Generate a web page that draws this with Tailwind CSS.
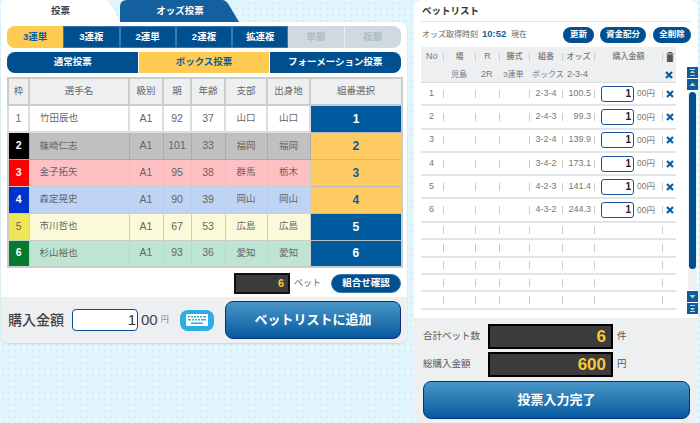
<!DOCTYPE html>
<html lang="ja">
<head>
<meta charset="utf-8">
<title>投票</title>
<script src="https://cdn.jsdelivr.net/npm/@tailwindcss/browser@4"></script>
</head>
<body class="w-[700px] h-[423px] overflow-hidden bg-[#e4f6fd] bg-[radial-gradient(#cbe8f3_0.6px,transparent_0.9px)] bg-[length:6px_6px] font-['Liberation_Sans','Noto_Sans_CJK_JP',sans-serif] text-[#666]">
<div class="flex items-start">
  <!-- left column -->
  <div class="w-[406px] ml-px">
    <div class="flex h-[22px]">
      <div class="relative w-[119px] h-[22px] flex items-center justify-center text-[9.5px] font-bold text-[#444]">
        <svg class="absolute inset-0" width="119" height="22" viewBox="0 0 119 22"><path d="M0 22V6Q0 0 6 0H103Q107 0 110 5L119 22Z" fill="#fff"/></svg>
        <span class="relative">投票</span>
      </div>
      <div class="relative w-[120px] h-[22px] flex items-center justify-center text-[9.5px] font-bold text-white">
        <svg class="absolute inset-0" width="120" height="22" viewBox="0 0 120 22"><path d="M0 22V7Q0 0 7 0H102Q106 0 109 5L119 22Z" fill="#14609f"/></svg>
        <span class="relative">オッズ投票</span>
      </div>
    </div>
    <div class="bg-white rounded-b-lg rounded-tr-lg shadow-[0_1px_2px_rgba(0,0,0,0.15)] h-[321px] flex flex-col">
      <div class="px-[6px] pt-[4px] flex flex-col">
        <div class="grid grid-cols-7 h-[22px] rounded-lg overflow-hidden text-[9.5px] font-bold text-white bg-[#cfd9df]">
          <div class="flex items-center justify-center bg-[#ffcb52] text-[#0a5ca3]">3連単</div>
          <div class="flex items-center justify-center bg-[#00508f] border border-[#3a78ab]">3連複</div>
          <div class="flex items-center justify-center bg-[#00508f] border border-[#3a78ab]">2連単</div>
          <div class="flex items-center justify-center bg-[#00508f] border border-[#3a78ab]">2連複</div>
          <div class="flex items-center justify-center bg-[#00508f] border border-[#3a78ab]">拡連複</div>
          <div class="flex items-center justify-center text-[#b0bcc4] border-r border-[#e6ecef]">単勝</div>
          <div class="flex items-center justify-center text-[#b0bcc4]">複勝</div>
        </div>
        <div class="grid grid-cols-3 h-[21px] mt-[4px] rounded-lg overflow-hidden text-[9.5px] font-bold text-white">
          <div class="flex items-center justify-center bg-[#00508f]">通常投票</div>
          <div class="flex items-center justify-center bg-[#ffcb52] text-[#0a5ca3] border-x border-white">ボックス投票</div>
          <div class="flex items-center justify-center bg-[#00508f]">フォーメーション投票</div>
        </div>
        <table class="table-fixed border-collapse w-[394px] mt-[4px] text-[9.5px] text-center border-2 border-[#ccc]">
          <colgroup>
            <col class="w-[21px]"><col class="w-[100px]"><col class="w-[34px]"><col class="w-[28px]"><col class="w-[34px]"><col class="w-[42px]"><col class="w-[43px]"><col class="w-[92px]">
          </colgroup>
          <thead>
            <tr class="h-[27px] bg-[#eeeff1]">
              <th class="font-normal border-2 border-[#ccc]">枠</th>
              <th class="font-normal border-2 border-[#ccc]">選手名</th>
              <th class="font-normal border-2 border-[#ccc]">級別</th>
              <th class="font-normal border-2 border-[#ccc]">期</th>
              <th class="font-normal border-2 border-[#ccc]">年齢</th>
              <th class="font-normal border-2 border-[#ccc]">支部</th>
              <th class="font-normal border-2 border-[#ccc]">出身地</th>
              <th class="font-normal border-2 border-[#ccc]">組番選択</th>
            </tr>
          </thead>
          <tbody>
            <tr class="h-[27px] bg-white">
              <td class="border-2 border-[#ddd] text-[10.5px]">1</td>
              <td class="border-2 border-[#ddd] text-left pl-[10px]">竹田辰也</td>
              <td class="border-2 border-[#ddd] text-[10.5px]">A1</td><td class="border-2 border-[#ddd] text-[10.5px]">92</td><td class="border-2 border-[#ddd] text-[10.5px]">37</td><td class="border-2 border-[#ddd]">山口</td><td class="border-2 border-[#ddd]">山口</td>
              <td class="border border-[#bbb] bg-[#005a9e] text-white font-bold text-[12px]">1</td>
            </tr>
            <tr class="h-[27px] bg-[#c0c0c0]">
              <td class="border border-[#aaa] bg-black text-white font-bold text-[10.5px]">2</td>
              <td class="border border-[#aaa] text-left pl-[10px]">篠崎仁志</td>
              <td class="border border-[#aaa] text-[10.5px]">A1</td><td class="border border-[#aaa] text-[10.5px]">101</td><td class="border border-[#aaa] text-[10.5px]">33</td><td class="border border-[#aaa]">福岡</td><td class="border border-[#aaa]">福岡</td>
              <td class="border border-[#bbb] bg-[#fdcb62] text-[#0a5ca3] font-bold text-[12px]">2</td>
            </tr>
            <tr class="h-[27px] bg-[#ffc0c4]">
              <td class="border border-[#ccc] bg-[#f00] text-white font-bold text-[10.5px]">3</td>
              <td class="border border-[#ccc] text-left pl-[10px]">金子拓矢</td>
              <td class="border border-[#ccc] text-[10.5px]">A1</td><td class="border border-[#ccc] text-[10.5px]">95</td><td class="border border-[#ccc] text-[10.5px]">38</td><td class="border border-[#ccc]">群馬</td><td class="border border-[#ccc]">栃木</td>
              <td class="border border-[#bbb] bg-[#fdcb62] text-[#0a5ca3] font-bold text-[12px]">3</td>
            </tr>
            <tr class="h-[27px] bg-[#bfd3f2]">
              <td class="border border-[#ccc] bg-[#0033cc] text-white font-bold text-[10.5px]">4</td>
              <td class="border border-[#ccc] text-left pl-[10px]">森定晃史</td>
              <td class="border border-[#ccc] text-[10.5px]">A1</td><td class="border border-[#ccc] text-[10.5px]">90</td><td class="border border-[#ccc] text-[10.5px]">39</td><td class="border border-[#ccc]">岡山</td><td class="border border-[#ccc]">岡山</td>
              <td class="border border-[#bbb] bg-[#fdcb62] text-[#0a5ca3] font-bold text-[12px]">4</td>
            </tr>
            <tr class="h-[27px] bg-[#fafad8]">
              <td class="border border-[#ccc] bg-[#eee654] text-[10.5px]">5</td>
              <td class="border border-[#ccc] text-left pl-[10px]">市川哲也</td>
              <td class="border border-[#ccc] text-[10.5px]">A1</td><td class="border border-[#ccc] text-[10.5px]">67</td><td class="border border-[#ccc] text-[10.5px]">53</td><td class="border border-[#ccc]">広島</td><td class="border border-[#ccc]">広島</td>
              <td class="border border-[#bbb] bg-[#005a9e] text-white font-bold text-[12px]">5</td>
            </tr>
            <tr class="h-[27px] bg-[#bde5d2]">
              <td class="border border-[#ccc] bg-[#067a2e] text-white font-bold text-[10.5px]">6</td>
              <td class="border border-[#ccc] text-left pl-[10px]">杉山裕也</td>
              <td class="border border-[#ccc] text-[10.5px]">A1</td><td class="border border-[#ccc] text-[10.5px]">93</td><td class="border border-[#ccc] text-[10.5px]">36</td><td class="border border-[#ccc]">愛知</td><td class="border border-[#ccc]">愛知</td>
              <td class="border border-[#bbb] bg-[#005a9e] text-white font-bold text-[12px]">6</td>
            </tr>
          </tbody>
        </table>
        <div class="flex items-center h-[21px] mt-[5px] justify-end">
          <div class="w-[56px] h-[21px] bg-[#3c3c3c] border-2 border-[#111] text-right pr-[4px] text-[#f5c93a] font-bold text-[11px] leading-[17px]">6</div>
          <span class="text-[9px] ml-[4px] w-[37px]">ベット</span>
          <div class="w-[70px] h-[19px] rounded-full bg-[#00508f] border border-[#3a78ab] text-white font-bold text-[9.5px] flex items-center justify-center">組合せ確認</div>
        </div>
      </div>
      <div class="mt-[3px] h-[46px] bg-[#eeeff1] rounded-b-lg flex items-center pl-[7px]">
        <span class="text-[14px] font-medium text-[#444] w-[57px] whitespace-nowrap">購入金額</span>
        <div class="ml-[7px] w-[66px] h-[22px] bg-white border border-[#0a4d94] rounded-[4px] text-right pr-px text-[15px] text-[#333] leading-[20px]">1</div>
        <div class="w-[42px] flex items-center">
          <span class="ml-[3px] text-[15px] text-[#444]">00</span>
          <span class="ml-[3px] text-[8px] text-[#777]">円</span>
        </div>
        <div class="w-[34px] h-[21px] rounded-lg bg-[#2eaee0] flex items-center justify-center">
          <svg width="22" height="12" viewBox="0 0 22 12"><rect width="22" height="12" rx="1" fill="#fff"/><g fill="#2eaee0"><rect x="2" y="2" width="2" height="1.5"/><rect x="5" y="2" width="2" height="1.5"/><rect x="8" y="2" width="2" height="1.5"/><rect x="11" y="2" width="2" height="1.5"/><rect x="14" y="2" width="2" height="1.5"/><rect x="17" y="2" width="3" height="1.5"/><rect x="2" y="5" width="3" height="1.5"/><rect x="6" y="5" width="2" height="1.5"/><rect x="9" y="5" width="2" height="1.5"/><rect x="12" y="5" width="2" height="1.5"/><rect x="15" y="5" width="5" height="1.5"/><rect x="5" y="8.5" width="12" height="1.5"/></g></svg>
        </div>
        <div class="ml-[11px] w-[176px] h-[38px] rounded-lg border border-[#0a2f78] bg-linear-to-b from-[#4797c8] to-[#005a9e] text-white font-bold text-[13px] flex items-center justify-center">ベットリストに追加</div>
      </div>
    </div>
  </div>

  <!-- right column -->
  <div class="w-[284px] h-[423px] ml-[7px] bg-white rounded-lg flex flex-col">
    <div class="mx-[7px] w-[270px] h-[22px] border-b border-[#e4e4e4] pl-px pt-[3px] text-[9.5px] font-bold text-[#333] leading-[15px]">ベットリスト</div>
    <div class="flex items-center h-[25px] ml-[8px] w-[269px]">
      <span class="text-[8px] w-[60px] whitespace-nowrap">オッズ取得時刻</span>
      <span class="w-[24px] text-[9.5px] font-bold text-[#14609f]">10:52</span>
      <span class="ml-[5px] text-[8px]">現在</span>
      <div class="ml-auto w-[31px] h-[16px] rounded-full bg-[#00508f] text-white font-bold text-[8.5px] flex items-center justify-center">更新</div>
      <div class="ml-[6px] w-[46px] h-[16px] rounded-full bg-[#00508f] text-white font-bold text-[8.5px] flex items-center justify-center">資金配分</div>
      <div class="ml-[7px] w-[38px] h-[16px] rounded-full bg-[#00508f] text-white font-bold text-[8.5px] flex items-center justify-center">全削除</div>
    </div>
    <div class="flex flex-1 min-h-0">
      <div class="ml-[7px] w-[255px] text-[9px] text-[#777]">
        <div class="bg-[#eeeff1] h-[36px] border-b border-[#ddd]">
          <div class="grid grid-cols-[23px_32px_24px_30px_33px_32px_68px_13px] h-[20px] items-center text-[8px] font-medium">
            <div class="flex justify-between items-center pl-[5px]"><span class="text-[9px]">No</span><i class="w-px h-[8px] bg-[#ccc]"></i></div>
            <div class="flex justify-between items-center"><span class="flex-1 text-center">場</span><i class="w-px h-[8px] bg-[#ccc]"></i></div>
            <div class="flex justify-between items-center"><span class="flex-1 text-center text-[9px]">R</span><i class="w-px h-[8px] bg-[#ccc]"></i></div>
            <div class="flex justify-between items-center"><span class="flex-1 text-center">勝式</span><i class="w-px h-[8px] bg-[#ccc]"></i></div>
            <div class="flex justify-between items-center"><span class="flex-1 text-center">組番</span><i class="w-px h-[8px] bg-[#ccc]"></i></div>
            <div class="flex justify-between items-center"><span class="flex-1 text-center whitespace-nowrap">オッズ</span><i class="w-px h-[8px] bg-[#ccc]"></i></div>
            <div class="flex justify-between items-center"><span class="flex-1 text-center">購入金額</span><i class="w-px h-[8px] bg-[#ccc]"></i></div>
            <div class="flex justify-center"><svg width="8" height="10" viewBox="0 0 7 9"><path d="M0 1.500H7M2 1V0H5V1M1 2.500H6V9H1Z" fill="#555" stroke="#555" stroke-width="0.6"/></svg></div>
          </div>
          <div class="flex h-[15px] items-center text-[8px]">
            <span class="ml-[30px] w-[16px]">児島</span>
            <span class="ml-[14px] w-[11px] text-[9px]">2R</span>
            <span class="ml-[11px] w-[21px] whitespace-nowrap">3連単</span>
            <span class="ml-[8px] w-[32px] whitespace-nowrap">ボックス</span>
            <span class="ml-[3px] text-[9px]">2-3-4</span>
            <svg class="ml-auto mr-[3px]" width="8" height="8" viewBox="0 0 8 8"><path d="M1 1L7 7M7 1L1 7" stroke="#0a5ca3" stroke-width="2.200"/></svg>
          </div>
        </div>
        <div class="grid grid-cols-[23px_32px_24px_30px_33px_32px_68px_13px] h-[23.3px] items-center border-b-2 border-[#e2e4e6]">
          <div class="flex justify-between items-center pl-[8px]"><span>1</span><i class="w-px h-[8px] bg-[#ccc]"></i></div>
          <div class="flex justify-end"><i class="w-px h-[8px] bg-[#ccc]"></i></div>
          <div class="flex justify-end"><i class="w-px h-[8px] bg-[#ccc]"></i></div>
          <div class="flex justify-end"><i class="w-px h-[8px] bg-[#ccc]"></i></div>
          <div class="flex justify-between items-center"><span class="flex-1 text-center">2-3-4</span><i class="w-px h-[8px] bg-[#ccc]"></i></div>
          <div class="flex justify-between items-center"><span class="flex-1 text-right pr-[3px]">100.5</span><i class="w-px h-[8px] bg-[#ccc]"></i></div>
          <div class="flex items-center"><div class="ml-[6px] w-[33px] h-[16px] bg-white border border-[#1d4f94] rounded-[3px] text-right pr-[2px] text-[10px] font-bold text-[#222] leading-[14px]">1</div><span class="ml-[3px] flex-1 whitespace-nowrap text-[8.5px]">00円</span><i class="w-px h-[8px] bg-[#ccc]"></i></div>
          <div class="flex justify-center"><svg width="8" height="8" viewBox="0 0 8 8"><path d="M1 1L7 7M7 1L1 7" stroke="#0a5ca3" stroke-width="2.200"/></svg></div>
        </div>
        <div class="grid grid-cols-[23px_32px_24px_30px_33px_32px_68px_13px] h-[23.3px] items-center border-b-2 border-[#e2e4e6]">
          <div class="flex justify-between items-center pl-[8px]"><span>2</span><i class="w-px h-[8px] bg-[#ccc]"></i></div>
          <div class="flex justify-end"><i class="w-px h-[8px] bg-[#ccc]"></i></div>
          <div class="flex justify-end"><i class="w-px h-[8px] bg-[#ccc]"></i></div>
          <div class="flex justify-end"><i class="w-px h-[8px] bg-[#ccc]"></i></div>
          <div class="flex justify-between items-center"><span class="flex-1 text-center">2-4-3</span><i class="w-px h-[8px] bg-[#ccc]"></i></div>
          <div class="flex justify-between items-center"><span class="flex-1 text-right pr-[3px]">99.3</span><i class="w-px h-[8px] bg-[#ccc]"></i></div>
          <div class="flex items-center"><div class="ml-[6px] w-[33px] h-[16px] bg-white border border-[#1d4f94] rounded-[3px] text-right pr-[2px] text-[10px] font-bold text-[#222] leading-[14px]">1</div><span class="ml-[3px] flex-1 whitespace-nowrap text-[8.5px]">00円</span><i class="w-px h-[8px] bg-[#ccc]"></i></div>
          <div class="flex justify-center"><svg width="8" height="8" viewBox="0 0 8 8"><path d="M1 1L7 7M7 1L1 7" stroke="#0a5ca3" stroke-width="2.200"/></svg></div>
        </div>
        <div class="grid grid-cols-[23px_32px_24px_30px_33px_32px_68px_13px] h-[23.3px] items-center border-b-2 border-[#e2e4e6]">
          <div class="flex justify-between items-center pl-[8px]"><span>3</span><i class="w-px h-[8px] bg-[#ccc]"></i></div>
          <div class="flex justify-end"><i class="w-px h-[8px] bg-[#ccc]"></i></div>
          <div class="flex justify-end"><i class="w-px h-[8px] bg-[#ccc]"></i></div>
          <div class="flex justify-end"><i class="w-px h-[8px] bg-[#ccc]"></i></div>
          <div class="flex justify-between items-center"><span class="flex-1 text-center">3-2-4</span><i class="w-px h-[8px] bg-[#ccc]"></i></div>
          <div class="flex justify-between items-center"><span class="flex-1 text-right pr-[3px]">139.9</span><i class="w-px h-[8px] bg-[#ccc]"></i></div>
          <div class="flex items-center"><div class="ml-[6px] w-[33px] h-[16px] bg-white border border-[#1d4f94] rounded-[3px] text-right pr-[2px] text-[10px] font-bold text-[#222] leading-[14px]">1</div><span class="ml-[3px] flex-1 whitespace-nowrap text-[8.5px]">00円</span><i class="w-px h-[8px] bg-[#ccc]"></i></div>
          <div class="flex justify-center"><svg width="8" height="8" viewBox="0 0 8 8"><path d="M1 1L7 7M7 1L1 7" stroke="#0a5ca3" stroke-width="2.200"/></svg></div>
        </div>
        <div class="grid grid-cols-[23px_32px_24px_30px_33px_32px_68px_13px] h-[23.3px] items-center border-b-2 border-[#e2e4e6]">
          <div class="flex justify-between items-center pl-[8px]"><span>4</span><i class="w-px h-[8px] bg-[#ccc]"></i></div>
          <div class="flex justify-end"><i class="w-px h-[8px] bg-[#ccc]"></i></div>
          <div class="flex justify-end"><i class="w-px h-[8px] bg-[#ccc]"></i></div>
          <div class="flex justify-end"><i class="w-px h-[8px] bg-[#ccc]"></i></div>
          <div class="flex justify-between items-center"><span class="flex-1 text-center">3-4-2</span><i class="w-px h-[8px] bg-[#ccc]"></i></div>
          <div class="flex justify-between items-center"><span class="flex-1 text-right pr-[3px]">173.1</span><i class="w-px h-[8px] bg-[#ccc]"></i></div>
          <div class="flex items-center"><div class="ml-[6px] w-[33px] h-[16px] bg-white border border-[#1d4f94] rounded-[3px] text-right pr-[2px] text-[10px] font-bold text-[#222] leading-[14px]">1</div><span class="ml-[3px] flex-1 whitespace-nowrap text-[8.5px]">00円</span><i class="w-px h-[8px] bg-[#ccc]"></i></div>
          <div class="flex justify-center"><svg width="8" height="8" viewBox="0 0 8 8"><path d="M1 1L7 7M7 1L1 7" stroke="#0a5ca3" stroke-width="2.200"/></svg></div>
        </div>
        <div class="grid grid-cols-[23px_32px_24px_30px_33px_32px_68px_13px] h-[23.3px] items-center border-b-2 border-[#e2e4e6]">
          <div class="flex justify-between items-center pl-[8px]"><span>5</span><i class="w-px h-[8px] bg-[#ccc]"></i></div>
          <div class="flex justify-end"><i class="w-px h-[8px] bg-[#ccc]"></i></div>
          <div class="flex justify-end"><i class="w-px h-[8px] bg-[#ccc]"></i></div>
          <div class="flex justify-end"><i class="w-px h-[8px] bg-[#ccc]"></i></div>
          <div class="flex justify-between items-center"><span class="flex-1 text-center">4-2-3</span><i class="w-px h-[8px] bg-[#ccc]"></i></div>
          <div class="flex justify-between items-center"><span class="flex-1 text-right pr-[3px]">141.4</span><i class="w-px h-[8px] bg-[#ccc]"></i></div>
          <div class="flex items-center"><div class="ml-[6px] w-[33px] h-[16px] bg-white border border-[#1d4f94] rounded-[3px] text-right pr-[2px] text-[10px] font-bold text-[#222] leading-[14px]">1</div><span class="ml-[3px] flex-1 whitespace-nowrap text-[8.5px]">00円</span><i class="w-px h-[8px] bg-[#ccc]"></i></div>
          <div class="flex justify-center"><svg width="8" height="8" viewBox="0 0 8 8"><path d="M1 1L7 7M7 1L1 7" stroke="#0a5ca3" stroke-width="2.200"/></svg></div>
        </div>
        <div class="grid grid-cols-[23px_32px_24px_30px_33px_32px_68px_13px] h-[23.3px] items-center border-b-2 border-[#e2e4e6]">
          <div class="flex justify-between items-center pl-[8px]"><span>6</span><i class="w-px h-[8px] bg-[#ccc]"></i></div>
          <div class="flex justify-end"><i class="w-px h-[8px] bg-[#ccc]"></i></div>
          <div class="flex justify-end"><i class="w-px h-[8px] bg-[#ccc]"></i></div>
          <div class="flex justify-end"><i class="w-px h-[8px] bg-[#ccc]"></i></div>
          <div class="flex justify-between items-center"><span class="flex-1 text-center">4-3-2</span><i class="w-px h-[8px] bg-[#ccc]"></i></div>
          <div class="flex justify-between items-center"><span class="flex-1 text-right pr-[3px]">244.3</span><i class="w-px h-[8px] bg-[#ccc]"></i></div>
          <div class="flex items-center"><div class="ml-[6px] w-[33px] h-[16px] bg-white border border-[#1d4f94] rounded-[3px] text-right pr-[2px] text-[10px] font-bold text-[#222] leading-[14px]">1</div><span class="ml-[3px] flex-1 whitespace-nowrap text-[8.5px]">00円</span><i class="w-px h-[8px] bg-[#ccc]"></i></div>
          <div class="flex justify-center"><svg width="8" height="8" viewBox="0 0 8 8"><path d="M1 1L7 7M7 1L1 7" stroke="#0a5ca3" stroke-width="2.200"/></svg></div>
        </div>
        <div class="grid grid-cols-[23px_32px_24px_30px_33px_32px_68px_13px] h-[17.4px] items-center border-b-2 border-[#e2e4e6]">
          <div class="flex justify-end"><i class="w-px h-[8px] bg-[#ccc]"></i></div><div class="flex justify-end"><i class="w-px h-[8px] bg-[#ccc]"></i></div><div class="flex justify-end"><i class="w-px h-[8px] bg-[#ccc]"></i></div><div class="flex justify-end"><i class="w-px h-[8px] bg-[#ccc]"></i></div><div class="flex justify-end"><i class="w-px h-[8px] bg-[#ccc]"></i></div><div class="flex justify-end"><i class="w-px h-[8px] bg-[#ccc]"></i></div><div class="flex justify-end"><i class="w-px h-[8px] bg-[#ccc]"></i></div>
        </div>
        <div class="grid grid-cols-[23px_32px_24px_30px_33px_32px_68px_13px] h-[17.4px] items-center border-b-2 border-[#e2e4e6]">
          <div class="flex justify-end"><i class="w-px h-[8px] bg-[#ccc]"></i></div><div class="flex justify-end"><i class="w-px h-[8px] bg-[#ccc]"></i></div><div class="flex justify-end"><i class="w-px h-[8px] bg-[#ccc]"></i></div><div class="flex justify-end"><i class="w-px h-[8px] bg-[#ccc]"></i></div><div class="flex justify-end"><i class="w-px h-[8px] bg-[#ccc]"></i></div><div class="flex justify-end"><i class="w-px h-[8px] bg-[#ccc]"></i></div><div class="flex justify-end"><i class="w-px h-[8px] bg-[#ccc]"></i></div>
        </div>
        <div class="grid grid-cols-[23px_32px_24px_30px_33px_32px_68px_13px] h-[17.4px] items-center border-b-2 border-[#e2e4e6]">
          <div class="flex justify-end"><i class="w-px h-[8px] bg-[#ccc]"></i></div><div class="flex justify-end"><i class="w-px h-[8px] bg-[#ccc]"></i></div><div class="flex justify-end"><i class="w-px h-[8px] bg-[#ccc]"></i></div><div class="flex justify-end"><i class="w-px h-[8px] bg-[#ccc]"></i></div><div class="flex justify-end"><i class="w-px h-[8px] bg-[#ccc]"></i></div><div class="flex justify-end"><i class="w-px h-[8px] bg-[#ccc]"></i></div><div class="flex justify-end"><i class="w-px h-[8px] bg-[#ccc]"></i></div>
        </div>
        <div class="grid grid-cols-[23px_32px_24px_30px_33px_32px_68px_13px] h-[17.4px] items-center border-b-2 border-[#e2e4e6]">
          <div class="flex justify-end"><i class="w-px h-[8px] bg-[#ccc]"></i></div><div class="flex justify-end"><i class="w-px h-[8px] bg-[#ccc]"></i></div><div class="flex justify-end"><i class="w-px h-[8px] bg-[#ccc]"></i></div><div class="flex justify-end"><i class="w-px h-[8px] bg-[#ccc]"></i></div><div class="flex justify-end"><i class="w-px h-[8px] bg-[#ccc]"></i></div><div class="flex justify-end"><i class="w-px h-[8px] bg-[#ccc]"></i></div><div class="flex justify-end"><i class="w-px h-[8px] bg-[#ccc]"></i></div>
        </div>
        <div class="grid grid-cols-[23px_32px_24px_30px_33px_32px_68px_13px] h-[17.4px] items-center border-b-2 border-[#e2e4e6]">
          <div class="flex justify-end"><i class="w-px h-[8px] bg-[#ccc]"></i></div><div class="flex justify-end"><i class="w-px h-[8px] bg-[#ccc]"></i></div><div class="flex justify-end"><i class="w-px h-[8px] bg-[#ccc]"></i></div><div class="flex justify-end"><i class="w-px h-[8px] bg-[#ccc]"></i></div><div class="flex justify-end"><i class="w-px h-[8px] bg-[#ccc]"></i></div><div class="flex justify-end"><i class="w-px h-[8px] bg-[#ccc]"></i></div><div class="flex justify-end"><i class="w-px h-[8px] bg-[#ccc]"></i></div>
        </div>
      </div>
      <!-- scrollbar -->
      <div class="ml-[11px] w-[11px] flex flex-col pt-[20px] h-[267px] gap-[1px]">
        <div class="h-[11px] bg-[#0a5ca3] flex items-center justify-center"><svg width="7" height="7" viewBox="0 0 7 7"><path d="M1 0.500H6M1 6.500H6" stroke="#ffcb52"/><path d="M3.500 1.500L6 4H1Z" fill="#ffcb52"/></svg></div>
        <div class="h-[11px] bg-[#0a5ca3] flex items-center justify-center"><svg width="7" height="7" viewBox="0 0 7 7"><path d="M3.500 1.500L6.500 5H0.500Z" fill="#ffcb52"/></svg></div>
        <div class="flex-1 bg-[#eeeff1] mx-px mt-px">
          <div class="h-[177px] w-[7px] mx-auto rounded-full bg-[#00508f]"></div>
        </div>
        <div class="h-[11px] bg-[#0a5ca3] flex items-center justify-center"><svg width="7" height="7" viewBox="0 0 7 7"><path d="M3.500 5.500L6.500 2H0.500Z" fill="#ffcb52"/></svg></div>
        <div class="h-[11px] bg-[#0a5ca3] flex items-center justify-center"><svg width="7" height="7" viewBox="0 0 7 7"><path d="M1 0.500H6M1 6.500H6" stroke="#ffcb52"/><path d="M3.500 5.500L6 3H1Z" fill="#ffcb52"/></svg></div>
      </div>
    </div>
    <div class="h-[105px] bg-[#eeeff1] rounded-b-lg px-[9px] pt-[6px]">
      <div class="flex items-center h-[25px]">
        <span class="w-[65px] text-[9.5px] text-[#555] whitespace-nowrap">合計ベット数</span>
        <div class="w-[125px] h-[25px] bg-[#3c3c3c] border-2 border-black text-right pr-[5px] text-[#f5c93a] font-bold text-[17px] leading-[21px]">6</div>
        <span class="ml-[4px] text-[9.5px] text-[#555]">件</span>
      </div>
      <div class="flex items-center h-[25px] mt-[3px]">
        <span class="w-[65px] text-[9.5px] text-[#555] whitespace-nowrap">総購入金額</span>
        <div class="w-[125px] h-[25px] bg-[#3c3c3c] border-2 border-black text-right pr-[5px] text-[#f5c93a] font-bold text-[17px] leading-[21px]">600</div>
        <span class="ml-[4px] text-[9.5px] text-[#555]">円</span>
      </div>
      <div class="mt-[4px] w-[267px] h-[38px] rounded-lg border border-[#0a2f78] bg-linear-to-b from-[#4797c8] to-[#005a9e] text-white font-bold text-[13px] flex items-center justify-center">投票入力完了</div>
    </div>
  </div>
</div>
</body>
</html>
